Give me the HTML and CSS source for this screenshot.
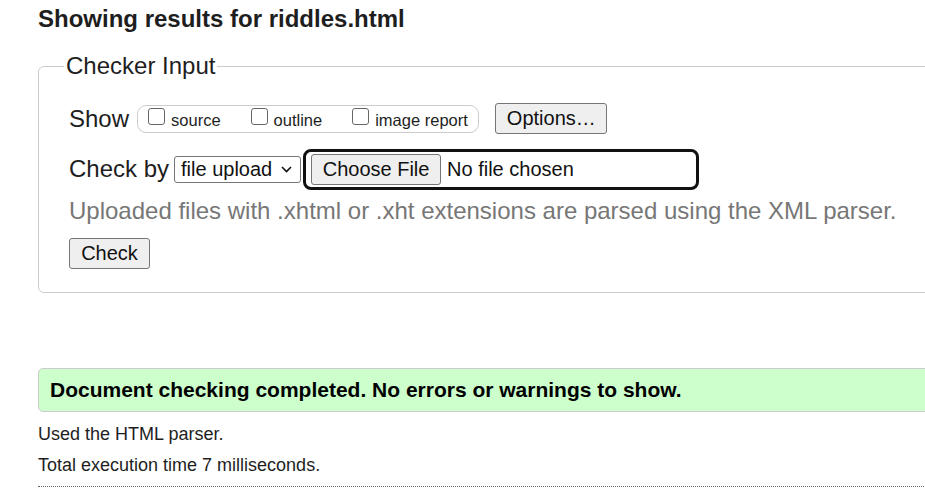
FILE: index.html
```html
<!DOCTYPE html>
<html lang="en">
<head>
<meta charset="utf-8">
<title>Showing results for riddles.html</title>
<link rel="stylesheet" href="styles.css">
</head>
<body>
<div class="page">
  <h2 class="title">Showing results for riddles.html</h2>
  <fieldset class="checker">
    <legend class="checker-legend">Checker Input</legend>
    <div class="row row-show">
      <span class="label">Show</span>
      <div class="show-group">
        <label class="opt"><span class="box"></span><span>source</span></label>
        <label class="opt"><span class="box"></span><span>outline</span></label>
        <label class="opt"><span class="box"></span><span>image report</span></label>
      </div>
      <button class="btn btn-options" type="button">Options…</button>
    </div>
    <div class="row row-check">
      <span class="label">Check by</span>
      <div class="select"><span>file upload</span><svg class="chev" width="11" height="7" viewBox="0 0 11 7"><path d="M1 1 L5.5 5.5 L10 1" fill="none" stroke="#111" stroke-width="1.6"/></svg></div>
      <div class="file">
        <button class="btn btn-file" type="button">Choose File</button>
        <span class="file-name">No file chosen</span>
      </div>
    </div>
    <p class="hint">Uploaded files with .xhtml or .xht extensions are parsed using the XML parser.</p>
    <div class="row row-submit">
      <button class="btn btn-check" type="button">Check</button>
    </div>
  </fieldset>
  <p class="success">Document checking completed. No errors or warnings to show.</p>
  <p class="info">Used the HTML parser.</p>
  <p class="info info-2">Total execution time 7 milliseconds.</p>
  <hr class="sep">
</div>
</body>
</html>
```
FILE: styles.css
```css
html, body {
  margin: 0;
  padding: 0;
  overflow: hidden;
  background: #fff;
}
body {
  font-family: "Liberation Sans", Arial, sans-serif;
  color: #222;
}
.page {
  margin-left: 38px;
  width: 1000px;
}
.title {
  margin: 5px 0 0;
  font-size: 24px;
  line-height: 28px;
  font-weight: bold;
  color: #1e1e1e;
}
.checker {
  margin: 19px 0 0;
  padding: 23px 0 23px 30px;
  border: 1px solid #ccc;
  border-radius: 6px;
  min-width: 0;
}
.checker-legend {
  font-size: 24px;
  line-height: 28px;
  padding: 0 2px;
  margin-left: -5px;
  color: #1e1e1e;
}
.row {
  display: flex;
  align-items: center;
}
.label {
  font-size: 24px;
  line-height: 28px;
  color: #1e1e1e;
}
.row-show {
  height: 31px;
}
.show-group {
  display: flex;
  align-items: center;
  margin-left: 8px;
  height: 26px;
  padding: 0 10px 0 10px;
  border: 1px solid #ccc;
  border-radius: 9px;
  gap: 30px;
}
.opt {
  display: flex;
  align-items: center;
  font-size: 16.5px;
  line-height: 18px;
  color: #1e1e1e;
  gap: 6px;
  padding-top: 2px;
}
.box {
  display: block;
  width: 15px;
  height: 15px;
  border: 1.5px solid #666;
  border-radius: 3px;
  background: #fff;
  margin-bottom: 6px;
}
.btn {
  font-family: "Liberation Sans", Arial, sans-serif;
  font-size: 20px;
  line-height: 23px;
  color: #111;
  background: #efefef;
  border: 1px solid #767676;
  border-radius: 3px;
  height: 31px;
  margin: 0;
  padding: 0 11px;
}
.btn-options {
  margin-left: 16px;
  width: 112px;
}
.row-check {
  margin-top: 15px;
  height: 40px;
}
.select {
  display: flex;
  align-items: center;
  justify-content: space-between;
  box-sizing: border-box;
  width: 127px;
  height: 27px;
  margin-left: 5px;
  padding: 0 8px 0 6px;
  border: 1px solid #767676;
  border-radius: 3px;
  font-size: 20px;
  color: #111;
}
.chev {
  display: block;
}
.file {
  display: flex;
  align-items: center;
  box-sizing: border-box;
  width: 396px;
  height: 41px;
  margin-left: 2px;
  padding: 0 5px;
  border: 3px solid #111;
  border-radius: 8px;
  gap: 6px;
}
.btn-file {
  width: 130px;
  padding: 0 10px;
}
.file-name {
  font-size: 20px;
  color: #111;
}
.hint {
  margin: 8px 0 0;
  font-size: 24px;
  line-height: 28px;
  color: #777;
}
.row-submit {
  margin-top: 13px;
}
.btn-check {
  width: 81px;
}
.success {
  margin: 75px 0 0;
  padding: 9px 11px;
  font-size: 21px;
  line-height: 24px;
  font-weight: bold;
  color: #000;
  background: #ccffcc;
  border: 1px solid #ccc;
  border-radius: 5px;
}
.info {
  margin: 12px 0 0;
  font-size: 18px;
  line-height: 20px;
  color: #1e1e1e;
}
.info-2 {
  margin-top: 11px;
}
.sep {
  margin: 11px 0 0;
  border: 0;
  border-top: 1px dotted #666;
  height: 0;
}
```
